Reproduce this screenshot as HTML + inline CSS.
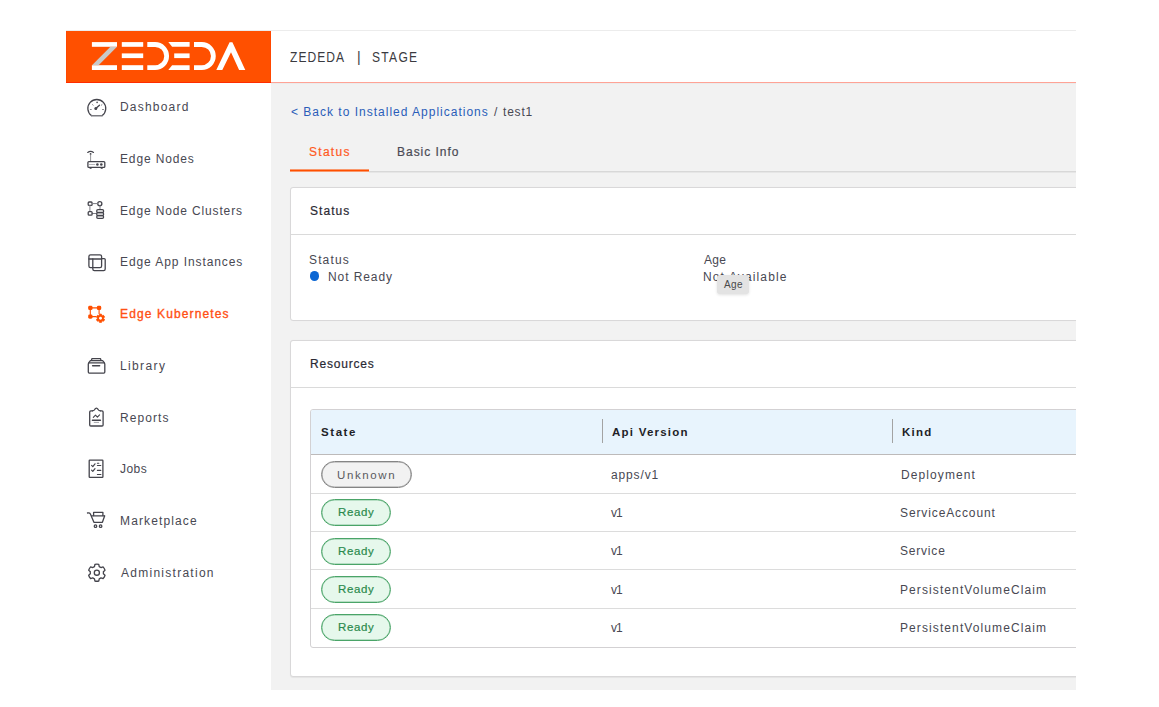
<!DOCTYPE html>
<html><head><meta charset="utf-8">
<style>
html,body{margin:0;padding:0;background:#fff;}
body{width:1159px;height:707px;position:relative;overflow:hidden;font-family:"Liberation Sans",sans-serif;}
.t{position:absolute;white-space:pre;}
.abs{position:absolute;box-sizing:border-box;}
#clip{position:absolute;left:0;top:0;width:1076px;height:707px;overflow:hidden;}
</style></head><body>
<div id="clip">
<!-- top line -->
<div class="abs" style="left:66px;top:30px;width:1010px;height:1px;background:#ececec"></div>
<!-- logo block -->
<div class="abs" style="left:66px;top:31px;width:205px;height:51px;background:#ff5000"></div>
<div class="abs" style="left:66px;top:31px;width:1px;height:51px;background:#ff4800"></div>
<!-- top bar border -->
<div class="abs" style="left:66px;top:82px;width:205px;height:1px;background:#ff2c00"></div>
<div class="abs" style="left:270px;top:31px;width:1px;height:51px;background:#ff4700"></div>
<div class="abs" style="left:271px;top:82px;width:805px;height:1px;background:#ffa396"></div>
<!-- content gray -->
<div class="abs" style="left:271px;top:83px;width:805px;height:607px;background:#f2f2f2"></div>
<div class="abs" style="left:271px;top:83px;width:805px;height:1px;background:#ecebeb"></div>
<!-- tabs -->
<div class="abs" style="left:369px;top:171px;width:720px;height:1px;background:#d8d8d8"></div><div class="abs" style="left:369px;top:172px;width:720px;height:1px;background:#e6e6e6"></div>
<div class="abs" style="left:290px;top:169px;width:79px;height:3px;background:linear-gradient(rgba(255,79,0,0.55) 0 1px,#ff4f00 1px 2px,rgba(255,79,0,0.55) 2px 3px)"></div>
<!-- status card -->
<div class="abs" style="left:290px;top:187px;width:900px;height:134px;background:#fff;border:1px solid #d9d8d9;border-radius:3px;box-shadow:0 0 1px rgba(0,0,0,0.04)"></div>
<div class="abs" style="left:291px;top:234px;width:900px;height:1px;background:#dadada"></div>
<div class="abs" style="left:309.8px;top:271.25px;width:9.5px;height:9.5px;border-radius:50%;background:#0b66d3"></div>
<!-- resources card -->
<div class="abs" style="left:290px;top:340px;width:900px;height:337px;background:#fff;border:1px solid #d9d8d9;border-radius:3px;box-shadow:0 0.5px 1px rgba(0,0,0,0.06)"></div>
<div class="abs" style="left:291px;top:387px;width:900px;height:1px;background:#dadada"></div>
<!-- table -->
<div class="abs" style="left:310px;top:409px;width:900px;height:239px;background:#fff;border:1px solid #d3d1d3;border-radius:3px"></div>
<div class="abs" style="left:311px;top:410px;width:900px;height:44px;background:#e8f4fd;border-radius:2px 0 0 0"></div>
<div class="abs" style="left:311px;top:454px;width:900px;height:1px;background:#bdbaba"></div>
<div class="abs" style="left:311px;top:493px;width:900px;height:1px;background:#dcdcdc"></div>
<div class="abs" style="left:311px;top:531px;width:900px;height:1px;background:#dcdcdc"></div>
<div class="abs" style="left:311px;top:569px;width:900px;height:1px;background:#dcdcdc"></div>
<div class="abs" style="left:311px;top:608px;width:900px;height:1px;background:#dcdcdc"></div>
<div class="abs" style="left:602px;top:419px;width:1px;height:24px;background:#a3a3a3"></div>
<div class="abs" style="left:892px;top:419px;width:1px;height:24px;background:#a3a3a3"></div>
<!-- pills -->
<div class="abs" style="left:321px;top:461px;width:91px;height:27px;background:#f2f2f2;border:1px solid #858585;border-radius:14px;box-shadow:inset 0 0 0 0.6px rgba(133,133,133,0.7)"></div>
<div class="abs" style="left:321px;top:499.20px;width:70px;height:27px;background:#e6f8ec;border:1px solid #4aa468;border-radius:14px;box-shadow:inset 0 0 0 0.5px rgba(74,164,104,0.6)"></div>
<div class="abs" style="left:321px;top:537.55px;width:70px;height:27px;background:#e6f8ec;border:1px solid #4aa468;border-radius:14px;box-shadow:inset 0 0 0 0.5px rgba(74,164,104,0.6)"></div>
<div class="abs" style="left:321px;top:575.90px;width:70px;height:27px;background:#e6f8ec;border:1px solid #4aa468;border-radius:14px;box-shadow:inset 0 0 0 0.5px rgba(74,164,104,0.6)"></div>
<div class="abs" style="left:321px;top:614.25px;width:70px;height:27px;background:#e6f8ec;border:1px solid #4aa468;border-radius:14px;box-shadow:inset 0 0 0 0.5px rgba(74,164,104,0.6)"></div>

<svg class="abs" width="1159" height="707" viewBox="0 0 1159 707" style="left:0;top:0">
<g fill="#ffffff"><rect x="91.9" y="42.1" width="25.1" height="4.7"/><rect x="91.9" y="65.2" width="25.1" height="4.8"/><polygon fill="#c9c9c9" points="110.4,46.8 117,46.8 98.6,65.2 92,65.2"/><rect x="121.8" y="42.1" width="21.4" height="4.7"/><rect x="121.8" y="53.4" width="21.4" height="4.7"/><rect x="121.8" y="65.2" width="21.4" height="4.8"/><path d="M147.3,42.1 H155.1 A13.95,13.95 0 0 1 155.1,70 H147.3 V65.2 H155.1 A9.15,9.15 0 0 0 155.1,46.9 H147.3 Z"/><polygon points="168.3,42.1 189.6,42.1 189.6,46.8 172.1,46.8"/><rect x="174.2" y="53.4" width="15.4" height="4.7"/><polygon points="172.1,65.2 189.6,65.2 189.6,70 168.3,70"/><path d="M194,42.1 H201.8 A13.95,13.95 0 0 1 201.8,70 H194 V65.2 H201.8 A9.15,9.15 0 0 0 201.8,46.9 H194 Z"/><polygon points="216.3,70 229.6,42.2 232.4,42.2 245.3,70 239.1,70 231,52.2 222.3,70"/></g><g fill="none" stroke="#44444c" stroke-width="1.3" stroke-linecap="round" stroke-linejoin="round"><path d="M91.4,115.6 A8.95,8.95 0 1 1 102.2,115.6"/><path d="M91.6,115.7 H102" stroke="#7a7a80" stroke-width="1.6"/><path d="M95.7,108.5 L99.5,105.2" stroke-width="1.3"/><path d="M92.5,104.6 L93.2,105.2 M101.3,105.2 L102.0,104.6 M90.3,109.5 L91.3,109.5 M102.5,109.5 L103.5,109.5" stroke="#85858b" stroke-width="1"/><path d="M87.7,152.4 Q90.6,150.2 93.5,152.4" stroke-width="1.2"/><path d="M90.6,155.4 V161.3" stroke-width="0.9" stroke="#8a8a90"/><rect x="87.9" y="161.6" width="16.9" height="5.8" rx="1"/><path d="M89.3,164.5 H94.8" stroke-width="0.7" stroke="#9a9aa0" stroke-dasharray="1 0.5"/><path d="M90,168.3 H91.2 M101.1,168.3 H102.3" stroke-width="1"/><rect x="88.2" y="202" width="3.9" height="3.4" rx="0.9"/><circle cx="99.8" cy="203.7" r="2.05"/><path d="M92.1,203.6 H97.7 M89.9,205.4 V211.6 M100,205.8 V209.3 M92.1,213.5 H96.5" stroke="#7c7c84" stroke-width="1"/><rect x="88.2" y="211.7" width="3.9" height="3.5" rx="0.9"/><rect x="96.7" y="209.7" width="6.9" height="2.8" rx="1.3"/><rect x="96.7" y="212.7" width="6.9" height="2.8" rx="1.3"/><rect x="96.7" y="215.6" width="6.9" height="2.8" rx="1.3"/><rect x="88.9" y="254.8" width="12.7" height="12.8" rx="1.6"/><path d="M88.9,259 H101.6"/><path d="M92.8,259 V269 Q92.8,270.6 94.4,270.6 H103.6 Q105.2,270.6 105.2,269 V259.6 Q105.2,258.6 104.2,258.6 H101.6"/><rect x="88.3" y="362.9" width="16.5" height="10.2" rx="1"/><path d="M92.6,365.8 H99.6" stroke-width="1.5"/><path d="M88.8,362.6 L90.4,360.6 H102.6 L104.3,362.6"/><path d="M91.3,360.4 L92,358.6 H100.4 L101.1,360.4"/><path d="M92.5,410.8 H90.8 Q89.7,410.8 89.7,411.9 V425 Q89.7,426 90.8,426 H102 Q103.1,426 103.1,425 V411.9 Q103.1,410.8 102,410.8 H100.3"/><path d="M92.5,410.8 Q94.3,410.8 94.8,409.4 Q95.4,408.2 96.4,408.2 Q97.4,408.2 98,409.4 Q98.5,410.8 100.3,410.8"/><path d="M93.3,417.4 L95.5,415.1 L97.4,417.1 L99.6,414.8" stroke-width="1.1"/><path d="M92.4,420.2 H100.4" stroke-width="1.4"/><path d="M94.2,422.4 H98.6" stroke-width="0.9" stroke="#9a9aa0"/><rect x="89.2" y="460.2" width="13.7" height="17.2" rx="0.6"/><path d="M91.6,465.4 L92.8,466.6 L95,463.8 M91.6,470.2 L92.8,471.4 L95,468.7" stroke-width="1.2"/><path d="M97.4,463.3 H98.8 M97.4,465.5 H100.8 M97.4,470.4 H100.8 M97.4,474.5 H100.9" stroke-width="1.1"/><path d="M87.5,513 Q89.7,512.6 90.4,514 L93.9,522.3 H102.4 L104.6,516"/><path d="M91.6,515.8 H104.6"/><path d="M93.6,515.6 V512.3 H102.9 V515.6"/><circle cx="95.5" cy="526.2" r="1.25"/><circle cx="100.6" cy="526.2" r="1.25"/><path d="M94.48,566.54L94.93,564.37A8.55,8.55 0 0 1 98.77,564.37L99.22,566.54A6.60,6.60 0 0 1 101.00,567.57L103.10,566.87A8.55,8.55 0 0 1 105.03,570.20L103.37,571.67A6.60,6.60 0 0 1 103.37,573.73L105.03,575.20A8.55,8.55 0 0 1 103.10,578.53L101.00,577.83A6.60,6.60 0 0 1 99.22,578.86L98.77,581.03A8.55,8.55 0 0 1 94.93,581.03L94.48,578.86A6.60,6.60 0 0 1 92.70,577.83L90.60,578.53A8.55,8.55 0 0 1 88.67,575.20L90.33,573.73A6.60,6.60 0 0 1 90.33,571.67L88.67,570.20A8.55,8.55 0 0 1 90.60,566.87L92.70,567.57A6.60,6.60 0 0 1 94.48,566.54Z"/><circle cx="96.85" cy="572.7" r="2.55"/></g><g fill="#44444c"><circle cx="95.8" cy="108.4" r="1.5"/><circle cx="97.1" cy="102.4" r="0.8"/><circle cx="90.6" cy="153.9" r="0.9"/><circle cx="97.4" cy="164.5" r="1.3"/><circle cx="101.3" cy="164.5" r="1.3"/></g><g fill="#ff4f00" stroke="#ff4f00"><path d="M90.3,307.9 H99.1 M90.3,307.9 V316.6 M90.3,316.6 H96.2 M99.1,307.9 V314" stroke-width="1.1" fill="none"/><rect x="88.2" y="305.8" width="4.3" height="4.3" rx="1.4" stroke="none"/><rect x="96.9" y="305.8" width="4.3" height="4.3" rx="1.4" stroke="none"/><rect x="88.2" y="314.4" width="4.3" height="4.3" rx="1.4" stroke="none"/><path d="M99.14,315.51L99.41,314.24A4.20,4.20 0 0 1 101.59,314.24L101.86,315.51A3.10,3.10 0 0 1 102.23,315.73L103.47,315.33A4.20,4.20 0 0 1 104.56,317.21L103.59,318.08A3.10,3.10 0 0 1 103.59,318.52L104.56,319.39A4.20,4.20 0 0 1 103.47,321.27L102.23,320.87A3.10,3.10 0 0 1 101.86,321.09L101.59,322.36A4.20,4.20 0 0 1 99.41,322.36L99.14,321.09A3.10,3.10 0 0 1 98.77,320.87L97.53,321.27A4.20,4.20 0 0 1 96.44,319.39L97.41,318.52A3.10,3.10 0 0 1 97.41,318.08L96.44,317.21A4.20,4.20 0 0 1 97.53,315.33L98.77,315.73A3.10,3.10 0 0 1 99.14,315.51Z" stroke-width="0.8" stroke-linejoin="round"/><circle cx="100.5" cy="318.3" r="1.45" fill="#fff" stroke="none"/></g>
</svg>
<div class="t" id="nav0" style="left:120.00px;top:101.24px;font-size:12px;line-height:12px;font-weight:400;color:#484852;letter-spacing:1.200px;">Dashboard</div>
<div class="t" id="nav1" style="left:120.00px;top:152.97px;font-size:12px;line-height:12px;font-weight:400;color:#484852;letter-spacing:0.856px;">Edge Nodes</div>
<div class="t" id="nav2" style="left:120.00px;top:204.70px;font-size:12px;line-height:12px;font-weight:400;color:#484852;letter-spacing:0.859px;">Edge Node Clusters</div>
<div class="t" id="nav3" style="left:120.00px;top:256.43px;font-size:12px;line-height:12px;font-weight:400;color:#484852;letter-spacing:0.918px;">Edge App Instances</div>
<div class="t" id="nav4" style="left:120.00px;top:308.16px;font-size:12px;line-height:12px;font-weight:400;color:#ff5014;letter-spacing:1.129px;-webkit-text-stroke:0.35px #ff5014;">Edge Kubernetes</div>
<div class="t" id="nav5" style="left:120.00px;top:359.89px;font-size:12px;line-height:12px;font-weight:400;color:#484852;letter-spacing:1.367px;">Library</div>
<div class="t" id="nav6" style="left:120.00px;top:411.62px;font-size:12px;line-height:12px;font-weight:400;color:#484852;letter-spacing:1.083px;">Reports</div>
<div class="t" id="nav7" style="left:120.00px;top:463.35px;font-size:12px;line-height:12px;font-weight:400;color:#484852;letter-spacing:0.433px;">Jobs</div>
<div class="t" id="nav8" style="left:120.00px;top:515.08px;font-size:12px;line-height:12px;font-weight:400;color:#484852;letter-spacing:1.130px;">Marketplace</div>
<div class="t" id="nav9" style="left:121.00px;top:566.81px;font-size:12px;line-height:12px;font-weight:400;color:#484852;letter-spacing:1.269px;">Administration</div>
<div class="t" id="tb1" style="left:290.00px;top:50.25px;font-size:14px;line-height:14px;font-weight:400;color:#3a3a40;letter-spacing:1.220px;transform:scaleX(0.86);transform-origin:0 0;">ZEDEDA</div>
<div class="t" id="tb2" style="left:357.00px;top:50.25px;font-size:14px;line-height:14px;font-weight:400;color:#3a3a40;letter-spacing:0.800px;">|</div>
<div class="t" id="tb3" style="left:372.00px;top:50.25px;font-size:14px;line-height:14px;font-weight:400;color:#3a3a40;letter-spacing:1.500px;transform:scaleX(0.86);transform-origin:0 0;">STAGE</div>
<div class="t" id="bc1" style="left:291.00px;top:105.64px;font-size:12px;line-height:12px;font-weight:400;color:#2a5db9;letter-spacing:1.000px;">&lt; Back to Installed Applications</div>
<div class="t" id="bc2" style="left:494.00px;top:105.64px;font-size:12px;line-height:12px;font-weight:400;color:#484852;letter-spacing:0.800px;">/</div>
<div class="t" id="bc3" style="left:503.00px;top:105.64px;font-size:12px;line-height:12px;font-weight:400;color:#484852;letter-spacing:0.800px;">test1</div>
<div class="t" id="tab1" style="left:309.00px;top:145.84px;font-size:12px;line-height:12px;font-weight:400;color:#ff5a1f;letter-spacing:1.280px;-webkit-text-stroke:0.2px #ff5a1f;">Status</div>
<div class="t" id="tab2" style="left:397.00px;top:145.84px;font-size:12px;line-height:12px;font-weight:400;color:#4a4a54;letter-spacing:0.978px;-webkit-text-stroke:0.2px #4a4a54;">Basic Info</div>
<div class="t" id="ch1" style="left:310.00px;top:205.14px;font-size:12px;line-height:12px;font-weight:400;color:#2a2a33;letter-spacing:1.040px;-webkit-text-stroke:0.2px #2a2a33;">Status</div>
<div class="t" id="sl1" style="left:309.00px;top:253.84px;font-size:12px;line-height:12px;font-weight:400;color:#484852;letter-spacing:1.140px;">Status</div>
<div class="t" id="sv1" style="left:328.00px;top:270.84px;font-size:12px;line-height:12px;font-weight:400;color:#484852;letter-spacing:0.913px;">Not Ready</div>
<div class="t" id="sl2" style="left:704.00px;top:253.84px;font-size:12px;line-height:12px;font-weight:400;color:#484852;letter-spacing:0.300px;">Age</div>
<div class="t" id="sv2" style="left:703.00px;top:270.64px;font-size:12px;line-height:12px;font-weight:400;color:#484852;letter-spacing:1.133px;">Not Available</div>
<div class="t" id="ch2" style="left:310.00px;top:358.04px;font-size:12px;line-height:12px;font-weight:400;color:#2a2a33;letter-spacing:0.812px;-webkit-text-stroke:0.2px #2a2a33;">Resources</div>
<div class="t" id="th1" style="left:321.00px;top:426.57px;font-size:11.5px;line-height:11.5px;font-weight:700;color:#1f1f28;letter-spacing:1.575px;">State</div>
<div class="t" id="th2" style="left:612.00px;top:426.87px;font-size:11.5px;line-height:11.5px;font-weight:700;color:#1f1f28;letter-spacing:1.230px;">Api Version</div>
<div class="t" id="th3" style="left:902.00px;top:426.87px;font-size:11.5px;line-height:11.5px;font-weight:700;color:#1f1f28;letter-spacing:1.267px;">Kind</div>
<div class="t" id="st0" style="left:337.00px;top:469.57px;font-size:11.5px;line-height:11.5px;font-weight:400;color:#5a5a60;letter-spacing:1.600px;">Unknown</div>
<div class="t" id="av0" style="left:611.00px;top:468.54px;font-size:12px;line-height:12px;font-weight:400;color:#484852;letter-spacing:0.867px;">apps/v1</div>
<div class="t" id="kd0" style="left:901.00px;top:468.54px;font-size:12px;line-height:12px;font-weight:400;color:#484852;letter-spacing:1.089px;">Deployment</div>
<div class="t" id="st1" style="left:338.00px;top:507.32px;font-size:11.5px;line-height:11.5px;font-weight:400;color:#2b8a4c;letter-spacing:0.650px;-webkit-text-stroke:0.2px #2b8a4c;">Ready</div>
<div class="t" id="av1" style="left:611.00px;top:506.89px;font-size:12px;line-height:12px;font-weight:400;color:#484852;letter-spacing:-1.000px;">v1</div>
<div class="t" id="kd1" style="left:900.00px;top:506.89px;font-size:12px;line-height:12px;font-weight:400;color:#484852;letter-spacing:0.885px;">ServiceAccount</div>
<div class="t" id="st2" style="left:338.00px;top:545.67px;font-size:11.5px;line-height:11.5px;font-weight:400;color:#2b8a4c;letter-spacing:0.650px;-webkit-text-stroke:0.2px #2b8a4c;">Ready</div>
<div class="t" id="av2" style="left:611.00px;top:545.24px;font-size:12px;line-height:12px;font-weight:400;color:#484852;letter-spacing:-1.000px;">v1</div>
<div class="t" id="kd2" style="left:900.00px;top:545.24px;font-size:12px;line-height:12px;font-weight:400;color:#484852;letter-spacing:0.800px;">Service</div>
<div class="t" id="st3" style="left:338.00px;top:584.02px;font-size:11.5px;line-height:11.5px;font-weight:400;color:#2b8a4c;letter-spacing:0.650px;-webkit-text-stroke:0.2px #2b8a4c;">Ready</div>
<div class="t" id="av3" style="left:611.00px;top:583.59px;font-size:12px;line-height:12px;font-weight:400;color:#484852;letter-spacing:-1.000px;">v1</div>
<div class="t" id="kd3" style="left:900.00px;top:583.59px;font-size:12px;line-height:12px;font-weight:400;color:#484852;letter-spacing:1.095px;">PersistentVolumeClaim</div>
<div class="t" id="st4" style="left:338.00px;top:622.37px;font-size:11.5px;line-height:11.5px;font-weight:400;color:#2b8a4c;letter-spacing:0.650px;-webkit-text-stroke:0.2px #2b8a4c;">Ready</div>
<div class="t" id="av4" style="left:611.00px;top:621.94px;font-size:12px;line-height:12px;font-weight:400;color:#484852;letter-spacing:-1.000px;">v1</div>
<div class="t" id="kd4" style="left:900.00px;top:621.94px;font-size:12px;line-height:12px;font-weight:400;color:#484852;letter-spacing:1.095px;">PersistentVolumeClaim</div>

<!-- tooltip -->
<div class="abs" style="left:717.4px;top:275.4px;width:32.1px;height:18.8px;background:#e3e3e3;border-radius:3px;box-shadow:0 1px 3px rgba(0,0,0,0.12)"></div>
<div class="t" id="tt" style="left:724.00px;top:280.24px;font-size:10px;line-height:10px;font-weight:400;color:#4a4a4a;letter-spacing:0.350px;">Age</div>

</div>
</body></html>
